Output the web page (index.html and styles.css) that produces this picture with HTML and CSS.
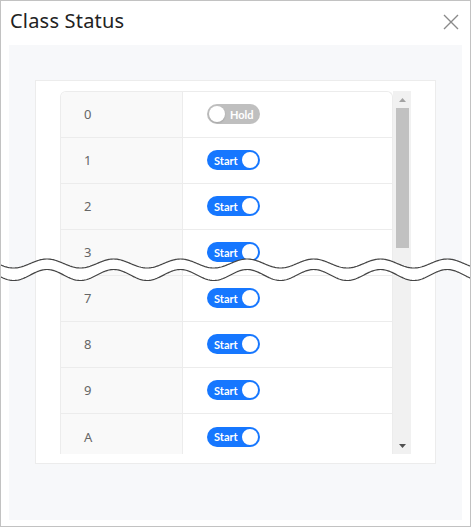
FILE: index.html
```html
<!DOCTYPE html>
<html>
<head>
<meta charset="utf-8">
<link rel="stylesheet" href="styles.css">
</head>
<body>
<div class="dialog">
  <div class="header">
    <div class="title">Class Status</div>
    <svg class="close" width="16" height="16" viewBox="0 0 16 16"><path d="M1 1 L15 15 M15 1 L1 15" stroke="#8a8a8a" stroke-width="1.4" fill="none"/></svg>
  </div>
  <div class="body">
    <div class="panel">
      <div class="scroll">
        <div class="table">
          <div class="row"><div class="cell key">0</div><div class="cell val"><span class="toggle off"><span class="knob"></span><span class="lbl">Hold</span></span></div></div>
          <div class="row"><div class="cell key">1</div><div class="cell val"><span class="toggle on"><span class="lbl">Start</span><span class="knob"></span></span></div></div>
          <div class="row"><div class="cell key">2</div><div class="cell val"><span class="toggle on"><span class="lbl">Start</span><span class="knob"></span></span></div></div>
          <div class="row"><div class="cell key">3</div><div class="cell val"><span class="toggle on"><span class="lbl">Start</span><span class="knob"></span></span></div></div>
          <div class="row"><div class="cell key">7</div><div class="cell val"><span class="toggle on"><span class="lbl">Start</span><span class="knob"></span></span></div></div>
          <div class="row"><div class="cell key">8</div><div class="cell val"><span class="toggle on"><span class="lbl">Start</span><span class="knob"></span></span></div></div>
          <div class="row"><div class="cell key">9</div><div class="cell val"><span class="toggle on"><span class="lbl">Start</span><span class="knob"></span></span></div></div>
          <div class="row"><div class="cell key">A</div><div class="cell val"><span class="toggle on"><span class="lbl">Start</span><span class="knob"></span></span></div></div>
        </div>
        <div class="scrollbar">
          <div class="arrow-btn"><svg width="7" height="4" viewBox="0 0 7 4"><path d="M0 4 L3.5 0 L7 4 Z" fill="#a3a3a3"/></svg></div>
          <div class="track"><div class="thumb"></div></div>
          <div class="arrow-btn down"><svg width="7" height="4" viewBox="0 0 7 4"><path d="M0 0 L7 0 L3.5 4 Z" fill="#505050"/></svg></div>
        </div>
      </div>
    </div>
  </div>
  <svg class="tear" width="471" height="34" viewBox="0 0 471 34">
    <path id="fillwave" fill="#ffffff" d=""/>
    <path id="topwave" fill="none" stroke="#444444" stroke-width="1.2" d=""/>
    <path id="botwave" fill="none" stroke="#444444" stroke-width="1.2" d=""/>
  </svg>
</div>
<script>
(function(){
  var P = 66.7, x0 = 47, top=[], bot=[];
  for (var x = -2; x <= 473; x += 1) {
    var c = Math.cos(2*Math.PI*(x-x0)/P);
    top.push([x, 8.5 - 4.5*c]);
    bot.push([x, 20 - 5.5*c]);
  }
  function line(pts){return pts.map(function(p,i){return (i?'L':'M')+p[0]+' '+p[1].toFixed(2);}).join(' ');}
  document.getElementById('topwave').setAttribute('d', line(top));
  document.getElementById('botwave').setAttribute('d', line(bot));
  var rb = bot.slice().reverse();
  var f = line(top) + ' ' + rb.map(function(p){return 'L'+p[0]+' '+p[1].toFixed(2);}).join(' ') + ' Z';
  document.getElementById('fillwave').setAttribute('d', f);
})();
</script>
</body>
</html>
```

FILE: styles.css
```css
* { box-sizing: border-box; }
html, body { margin: 0; padding: 0; background: #ffffff; }
body { font-family: "Noto Sans", "Open Sans", sans-serif; }

.dialog {
  position: relative;
  width: 471px;
  height: 527px;
  border: 1px solid #c2c2c2;
  background: #ffffff;
  overflow: hidden;
}

.header {
  height: 44px;
  display: flex;
  align-items: center;
  justify-content: space-between;
  padding: 0 11px 5px 9px;
}
.title {
  font-size: 20px;
  color: #222222;
  letter-spacing: 0.2px;
}
.close { display: block; margin-top: 2px; }

.body {
  margin: 0 8px;
  height: 475px;
  background: #f7f8fa;
  padding: 35px 26px 0 26px;
}

.panel {
  background: #ffffff;
  border: 1px solid #ececec;
  height: 384px;
  padding: 10px 23px 0 24px;
}

.scroll {
  display: flex;
  height: 363px;
  overflow: hidden;
}

.table {
  width: 333px;
  border: 1px solid #ececec;
  border-bottom: none;
  border-radius: 6px 6px 0 0;
  overflow: hidden;
  align-self: flex-start;
}

.row {
  display: flex;
  height: 46px;
  border-bottom: 1px solid #ececec;
}
.row:last-child { border-bottom: none; }

.cell {
  display: flex;
  align-items: center;
  padding-bottom: 1px;
}
.key {
  width: 122px;
  background: #f9f9f9;
  border-right: 1px solid #ececec;
  padding-left: 23px;
  font-size: 13px;
  color: #666666;
}
.val {
  flex: 1;
  padding-left: 24px;
}

.toggle {
  display: inline-flex;
  align-items: center;
  width: 53px;
  height: 20px;
  border-radius: 10px;
  padding: 0 2px;
  font-family: "Lato", "Noto Sans", sans-serif;
  font-weight: 700;
  font-size: 11px;
  color: #ffffff;
}
.toggle.on { background: #1677ff; justify-content: space-between; padding-left: 7px; }
.toggle.off { background: #bfbfbf; }
.toggle.off .lbl { margin-left: 5px; }
.knob {
  width: 16px;
  height: 16px;
  border-radius: 50%;
  background: #ffffff;
  flex: none;
}
.toggle.off .knob { box-shadow: 0 1px 2px rgba(0,0,0,0.15); }

.scrollbar {
  width: 18px;
  height: 363px;
  background: #f1f1f1;
  display: flex;
  flex-direction: column;
}
.arrow-btn {
  height: 17px;
  display: flex;
  align-items: center;
  justify-content: center;
}
.track { flex: 1; padding: 0 2px 0 3px; }
.thumb {
  height: 140px;
  background: #c1c1c1;
}

.tear {
  position: absolute;
  left: -1px;
  top: 254px;
  display: block;
}
```
